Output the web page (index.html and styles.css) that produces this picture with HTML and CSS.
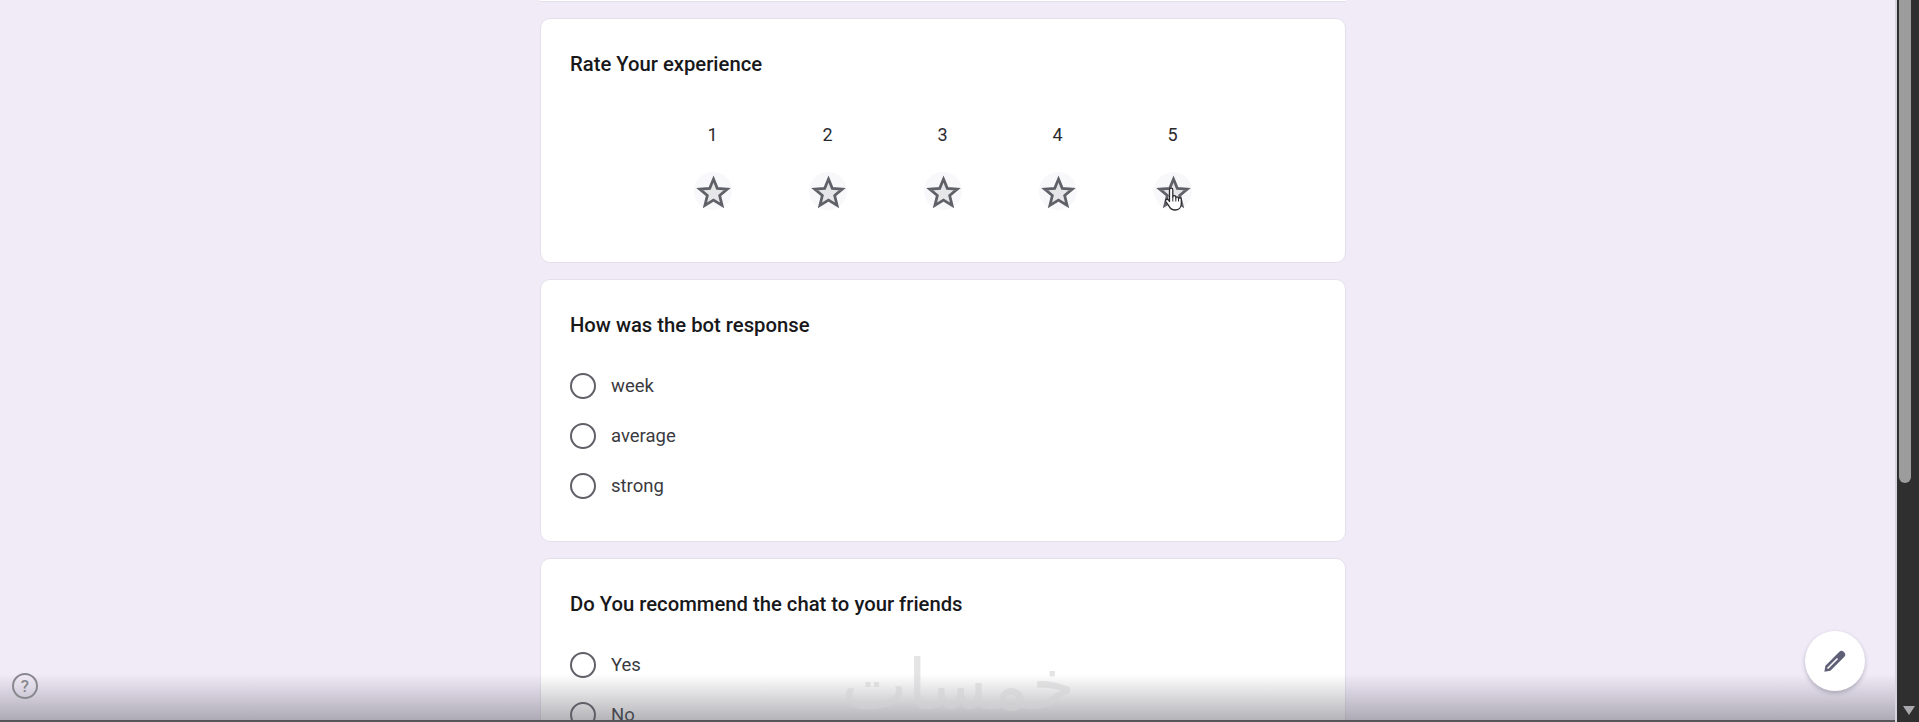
FILE: index.html
```html
<!DOCTYPE html>
<html lang="en">
<head>
<meta charset="utf-8">
<title>Feedback form</title>
<link rel="stylesheet" href="styles.css">
</head>
<body>
<svg class="defs" width="0" height="0" aria-hidden="true">
  <symbol id="star" viewBox="0 0 38 38">
    <path d="M19 5.500l4.100 10.100 10.900.8-8.300 7 2.600 10.600-9.300-5.700-9.300 5.700 2.600-10.600-8.300-7 10.900-.8z" fill="#e6e6e8" stroke="#5f6068" stroke-width="3" stroke-linejoin="miter"/>
  </symbol>
</svg>
<div class="layout">
  <main class="page">
    <div class="column">
      <div class="card card-stub"></div>
      <section class="card card-rate">
        <h2 class="title">Rate Your experience</h2>
        <div class="rating">
          <div class="rate-item"><span class="num">1</span><span class="star-wrap"><svg class="star"><use href="#star"/></svg></span></div>
          <div class="rate-item"><span class="num">2</span><span class="star-wrap"><svg class="star"><use href="#star"/></svg></span></div>
          <div class="rate-item"><span class="num">3</span><span class="star-wrap"><svg class="star"><use href="#star"/></svg></span></div>
          <div class="rate-item"><span class="num">4</span><span class="star-wrap"><svg class="star"><use href="#star"/></svg></span></div>
          <div class="rate-item"><span class="num">5</span><span class="star-wrap"><svg class="star"><use href="#star"/></svg>
            <svg class="cursor" viewBox="0 0 20 24"><path d="M6.500 3c0-2.400 3.300-2.400 3.300 0v7c0-1.800 3-1.800 3 0v1c0-1.600 2.700-1.600 2.700 0v1c0-1.500 2.800-1.400 2.800.3v4.500c0 3.600-2.600 6.200-6.200 6.200-3 0-4.700-1.300-5.900-3.600L2.800 14.500c-1-1.900 1.600-3.100 2.800-1.400l.9 1.400z" fill="#fff" stroke="#2c2c30" stroke-width="1.300" stroke-linejoin="round"/><path d="M9.800 10v4.500M12.800 11v3.500M15.500 12v2.500" fill="none" stroke="#2c2c30" stroke-width="1"/></svg>
          </span></div>
        </div>
      </section>
      <section class="card card-bot">
        <h2 class="title">How was the bot response</h2>
        <div class="options">
          <label class="option"><span class="radio"></span>week</label>
          <label class="option"><span class="radio"></span>average</label>
          <label class="option"><span class="radio"></span>strong</label>
        </div>
      </section>
      <section class="card card-rec">
        <h2 class="title">Do You recommend the chat to your friends</h2>
        <div class="options">
          <label class="option"><span class="radio"></span>Yes</label>
          <label class="option"><span class="radio"></span>No</label>
        </div>
      </section>
    </div>
  </main>
  <aside class="scrollbar">
    <div class="thumb"></div>
    <div class="arrow"></div>
  </aside>
</div>
<div class="shade"></div>
<div class="watermark" dir="rtl" lang="ar">خمسات</div>
<button class="help" aria-label="Help">?</button>
<button class="fab" aria-label="Edit">
  <svg viewBox="0 0 24 24" width="30" height="30"><path d="M3.500 20.500l.8-4.800L15.500 4.500c1-1 2.400-1 3.400 0l.6.6c1 1 1 2.400 0 3.400L8.300 19.700z" fill="#5f5f78"/><path d="M6 18l8-8" fill="none" stroke="#fff" stroke-width="1.300"/></svg>
</button>
</body>
</html>
```
FILE: styles.css
```css
* { box-sizing: border-box; }
html, body { margin: 0; height: 722px; overflow: hidden; }
body { background: #f1ebf8; font-family: Roboto, "Liberation Sans", sans-serif; color: #202124; position: relative; }
.defs { position: absolute; }
.layout { display: flex; height: 722px; }
.page { flex: 1; padding-left: 540px; overflow: hidden; }
.column { width: 806px; display: flex; flex-direction: column; gap: 16.500px; }
.card { background: #fff; border: 1px solid #e4e0ea; border-radius: 10px; padding: 0 29px; flex: none; }
.card-stub { height: 1.500px; padding: 0; border-width: 0 0 1px; border-radius: 0; }
.card-rate { height: 244.500px; padding-top: 32px; }
.card-bot { height: 262.500px; padding-top: 32px; }
.card-rec { height: 200px; padding-top: 32px; }
.title { margin: 0; font-size: 20.250px; line-height: 27px; font-weight: 500; color: #18181b; }
.rating { display: flex; padding-left: 85px; margin-top: 45px; }
.rate-item { width: 115px; display: flex; flex-direction: column; align-items: center; gap: 25px; }
.num { font-size: 18px; line-height: 24px; color: #2a2a2e; }
.star-wrap { width: 38px; height: 38px; padding: 1.500px; border-radius: 50%; background: #f8f8fa; position: relative; display: block; margin-left: 1px; }
.star { width: 35px; height: 35px; display: block; }
.cursor { position: absolute; left: 9px; top: 15px; width: 20px; height: 24px; }
.options { display: flex; flex-direction: column; gap: 20px; margin-top: 32px; }
.option { display: flex; align-items: center; gap: 15px; font-size: 18.500px; line-height: 30px; height: 30px; color: #3a3a40; }
.radio { width: 26px; height: 26px; border: 2px solid #5f6068; border-radius: 50%; flex: none; background: #fff; }
.scrollbar { width: 24px; flex: none; background: #2f2f2f; border-left: 2px solid #d6d3dc; position: relative; padding: 0 3px 0 2px; }
.thumb { width: 12px; height: 483px; background: #9c9c9c; border-radius: 0 0 6px 6px; }
.arrow { position: absolute; left: 6px; bottom: 7px; width: 0; height: 0; border: 6px solid transparent; border-top: 9px solid #a9a9ad; border-bottom: 0; }
.shade { position: absolute; left: 0; right: 24px; bottom: 0; height: 48px; background: linear-gradient(to bottom, rgba(90,90,100,0), rgba(90,90,100,.45) 96%, #55555a 96%); pointer-events: none; }
.watermark { position: absolute; left: 843px; top: 650px; width: 232px; text-align: center; font: 70px/70px "DejaVu Sans", sans-serif; color: rgba(210,210,212,.6); }
.help { position: absolute; left: 12px; top: 673px; width: 26px; height: 26px; padding: 0; border: 2px solid #88888e; border-radius: 50%; background: none; color: #88888e; font: 500 17px/22px Roboto, sans-serif; }
.fab { position: absolute; left: 1805px; top: 631px; width: 60px; height: 60px; padding: 0; border: 0; border-radius: 50%; background: #fff; box-shadow: 0 2px 4px rgba(60,60,80,.3); display: flex; align-items: center; justify-content: center; }
```
